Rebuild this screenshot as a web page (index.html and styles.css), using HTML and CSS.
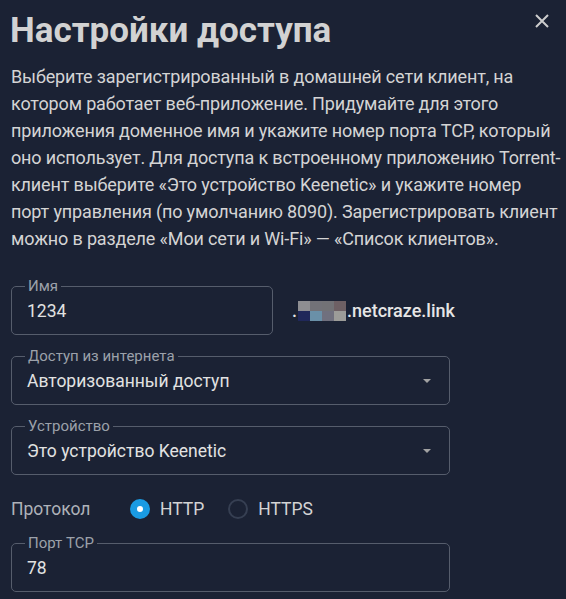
FILE: index.html
```html
<!DOCTYPE html>
<html lang="ru">

<head>
  <meta charset="utf-8">
  <meta name="viewport" content="width=device-width, initial-scale=1">
  <title>Настройки доступа</title>
  <link rel="stylesheet" href="styles.css">
</head>

<body>
  <div class="dialog">
    <div class="dialog-head">
      <h1 class="dialog-title">Настройки доступа</h1>
      <button class="close-btn" aria-label="Закрыть">
        <svg width="16" height="16" viewBox="0 0 16 16">
          <path d="M2 2 L14 14 M14 2 L2 14" stroke="currentColor" stroke-width="2" fill="none" />
        </svg>
      </button>
    </div>

    <p class="dialog-text">
      Выберите зарегистрированный в домашней сети клиент, на<br>
      котором работает веб-приложение. Придумайте для этого<br>
      приложения доменное имя и укажите номер порта TCP, который<br>
      оно использует. Для доступа к встроенному приложению Torrent-<br>
      клиент выберите «Это устройство Keenetic» и укажите номер<br>
      порт управления (по умолчанию 8090). Зарегистрировать клиент<br>
      можно в разделе «Мои сети и Wi-Fi» — «Список клиентов».
    </p>

    <div class="form">
      <div class="form-row">
        <div class="field field-short">
          <span class="field-label">Имя</span>
          <span class="field-value">1234</span>
        </div>
        <div class="domain">
          <span>.</span>
          <span class="blur">
            <i style="background: #8e8e92"></i><i style="background: #727278"></i><i style="background: #727276"></i><i style="background: #6e6064"></i>
            <i style="background: #20285a"></i><i style="background: #6a90a8"></i><i style="background: #70707e"></i><i style="background: #9c9c98"></i>
          </span>
          <span>.netcraze.link</span>
        </div>
      </div>

      <div class="field">
        <span class="field-label">Доступ из интернета</span>
        <span class="field-value">Авторизованный доступ</span>
        <span class="select-arrow"></span>
      </div>

      <div class="field">
        <span class="field-label">Устройство</span>
        <span class="field-value">Это устройство Keenetic</span>
        <span class="select-arrow"></span>
      </div>

      <div class="radio-row">
        <span class="radio-title">Протокол</span>
        <label class="radio radio-checked"><span class="radio-dot"></span>HTTP</label>
        <label class="radio"><span class="radio-dot"></span>HTTPS</label>
      </div>

      <div class="field">
        <span class="field-label">Порт TCP</span>
        <span class="field-value">78</span>
      </div>
    </div>
  </div>
</body>

</html>
```

FILE: styles.css
```css
body {
  margin: 0;
  padding: 0;
  background-color: #1b2234;
  font-family: Roboto, 'Liberation Sans', sans-serif;
  color: #d6d6d6;
}

.dialog {
  padding: 9px 16px 0 11px;
}

.dialog-head {
  display: flex;
  justify-content: space-between;
  align-items: flex-start;
}

.dialog-title {
  margin: 0;
  font-size: 35px;
  line-height: 43px;
  font-weight: 700;
  color: #d2d2d2;
  margin-left: -1px;
}

.close-btn {
  margin: 4px 0 0 0;
  padding: 0;
  width: 16px;
  height: 16px;
  border: none;
  background: none;
  color: #cdcdcd;
}

.close-btn svg {
  display: block;
}

.dialog-text {
  margin: 11px -16px 0 0;
  font-size: 18px;
  line-height: 27px;
  letter-spacing: -0.15px;
  white-space: nowrap;
  color: #d4d4d4;
}

.form {
  display: flex;
  flex-direction: column;
  gap: 21px;
  margin-top: 34px;
  width: 439px;
}

.form-row {
  display: flex;
  align-items: center;
}

.field {
  position: relative;
  box-sizing: border-box;
  display: flex;
  align-items: center;
  height: 49px;
  padding: 0 15px;
  border: 1px solid #565d6c;
  border-radius: 5px;
}

.field-short {
  width: 262px;
  flex: none;
}

.field-label {
  position: absolute;
  top: -10px;
  left: 13px;
  padding: 0 3px;
  font-size: 15px;
  line-height: 18px;
  color: #9ca1aa;
  background-color: #1b2234;
}

.field-value {
  flex: 1;
  font-size: 17.5px;
  color: #e2e2e2;
}

.select-arrow {
  width: 0;
  height: 0;
  margin-right: 3px;
  border-left: 4px solid transparent;
  border-right: 4px solid transparent;
  border-top: 4px solid #a2a2a2;
}

.domain {
  display: flex;
  align-items: center;
  margin-left: 19px;
  font-size: 18px;
  font-weight: 500;
  color: #e6e6e6;
  white-space: nowrap;
}

.blur {
  display: grid;
  grid-template-columns: repeat(4, 12px);
  grid-template-rows: 10px 10px;
  margin: 0 1px 0 1px;
}

.blur i {
  display: block;
}

.radio-row {
  display: flex;
  align-items: center;
  height: 26px;
  font-size: 17.5px;
}

.radio-title {
  width: 119px;
  color: #aeb2b9;
}

.radio {
  display: flex;
  align-items: center;
  gap: 10px;
  margin-right: 24px;
  color: #d4d4d4;
}

.radio-dot {
  box-sizing: border-box;
  width: 20px;
  height: 20px;
  border: 2px solid #363f52;
  border-radius: 50%;
}

.radio-checked .radio-dot {
  border: 7px solid #1a9be3;
  background-color: #ffffff;
}
```
